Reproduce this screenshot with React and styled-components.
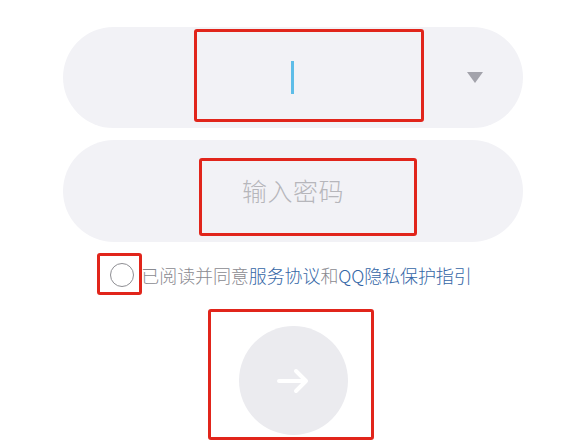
import React from "react";
import styled, { createGlobalStyle } from "styled-components";

const Global = createGlobalStyle`
  html, body { margin: 0; padding: 0; background: #ffffff; }
  body { font-family: "Noto Sans CJK SC", "Noto Sans", sans-serif; }
`;

const Page = styled.div`
  width: 586px;
  height: 440px;
  box-sizing: border-box;
  padding-top: 27px;
  display: flex;
  flex-direction: column;
  align-items: center;
  overflow: hidden;
`;

const Pill = styled.div`
  position: relative;
  width: 460px;
  height: ${(p) => p.$h}px;
  margin-top: ${(p) => p.$mt || 0}px;
  border-radius: 51px;
  background: #f2f2f6;
  display: grid;
  grid-template-columns: 1fr auto 1fr;
  align-items: center;
`;

const Highlight = styled.div`
  position: absolute;
  left: ${(p) => p.$l}px;
  top: ${(p) => p.$t}px;
  width: ${(p) => p.$w}px;
  height: ${(p) => p.$h}px;
  box-sizing: border-box;
  border: 3px solid #e1251b;
  border-radius: 3px;
  pointer-events: none;
  z-index: 1;
`;

const Caret = styled.div`
  grid-column: 2;
  width: 3px;
  height: 33px;
  background: #5ebde8;
  margin-left: -1px;
`;

const Arrow = styled.div`
  grid-column: 3;
  justify-self: end;
  margin-right: 40px;
  width: 0;
  height: 0;
  border-left: 8px solid transparent;
  border-right: 8px solid transparent;
  border-top: 11px solid #a3a3ab;
`;

const Placeholder = styled.div`
  grid-column: 2;
  font-size: 25px;
  font-weight: 300;
  color: #b6b6bb;
  letter-spacing: 0.5px;
  margin-top: -2px;
`;

const AgreeRow = styled.div`
  margin-top: 20px;
  display: flex;
  align-items: center;
  gap: 7px;
  margin-left: -4px;
`;

const RadioWrap = styled.div`
  position: relative;
  width: 24px;
  height: 24px;
`;

const Radio = styled.div`
  width: 24px;
  height: 24px;
  box-sizing: border-box;
  border-radius: 50%;
  border: 1.5px solid #8e8e93;
`;

const AgreeText = styled.span`
  font-size: 18px;
  font-weight: 300;
  color: #8a8a90;
  white-space: nowrap;
  letter-spacing: -0.1px;
`;

const Link = styled.span`
  color: #3466a6;
`;

const GoWrap = styled.div`
  position: relative;
  margin-top: 38px;
`;

const GoButton = styled.div`
  width: 109px;
  height: 109px;
  border-radius: 50%;
  background: #ebebef;
  display: flex;
  align-items: center;
  justify-content: center;
`;

export default function App() {
  return (
    <>
      <Global />
      <Page>
        <Pill $h={101}>
          <Caret />
          <Arrow />
          <Highlight $l={131} $t={2} $w={230} $h={93} />
        </Pill>
        <Pill $h={102} $mt={12}>
          <Placeholder>输入密码</Placeholder>
          <Highlight $l={136} $t={18} $w={218} $h={78} />
        </Pill>
        <AgreeRow>
          <RadioWrap>
            <Radio />
            <Highlight $l={-13} $t={-10} $w={45} $h={42} />
          </RadioWrap>
          <AgreeText>
            已阅读并同意<Link>服务协议</Link>和<Link>QQ隐私保护指引</Link>
          </AgreeText>
        </AgreeRow>
        <GoWrap>
          <GoButton>
            <svg width="34" height="26" viewBox="0 0 34 26" fill="none">
              <path
                d="M3 13 H30 M20 3 L30 13 L20 23"
                stroke="#ffffff"
                strokeWidth="4"
                strokeLinecap="round"
                strokeLinejoin="round"
              />
            </svg>
          </GoButton>
          <Highlight $l={-31} $t={-17} $w={166} $h={131} />
        </GoWrap>
      </Page>
    </>
  );
}
